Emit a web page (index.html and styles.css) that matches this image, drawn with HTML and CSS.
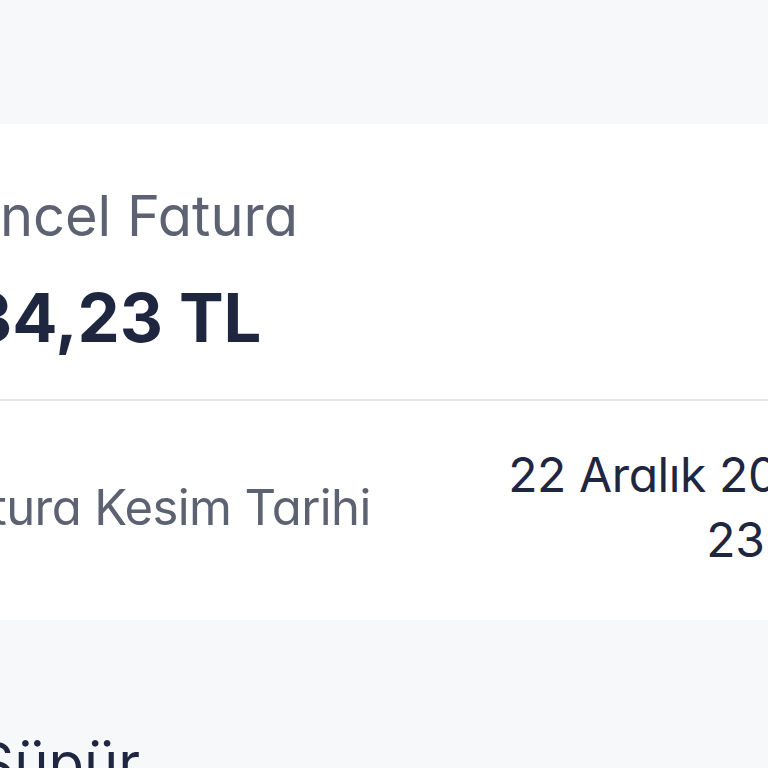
FILE: index.html
```html
<!DOCTYPE html>
<html lang="tr">
<head>
    <meta charset="UTF-8">
    <meta name="viewport" content="width=device-width, initial-scale=1.0">
    <title>Fatura</title>
    <link rel="stylesheet" href="styles.css">
</head>
<body>
    <div class="screen">
        <section class="bill-card">
            <div class="bill-head">
                <p class="bill-label">Güncel Fatura</p>
                <p class="bill-amount">134,23 TL</p>
            </div>
            <div class="bill-row">
                <span class="row-label">Fatura Kesim Tarihi</span>
                <span class="row-value">22 Aralık 2023<br>23:59</span>
            </div>
        </section>
        <h2 class="section-title">Süpür</h2>
    </div>
</body>
</html>
```
FILE: styles.css
```css
:root {
    --page-bg: #f7f8fa;
    --card-bg: #ffffff;
    --muted-text: #5c6272;
    --dark-text: #1f2640;
    --divider: #e5e6e9;
}
* { margin: 0; padding: 0; box-sizing: border-box; }
body { font-family: 'Inter', 'Noto Sans', sans-serif; font-feature-settings: "cv11"; background-color: var(--page-bg); color: var(--dark-text); overflow: hidden; height: 768px; }
.screen { width: 960px; margin-left: -95px; padding-top: 124px; }

/* --- Bill card --- */
.bill-card { background-color: var(--card-bg); }
.bill-head { padding: 0 20px; height: 277px; border-bottom: 2px solid var(--divider); }
.bill-label { padding-top: 58px; font-size: 56px; line-height: 68px; color: var(--muted-text); font-weight: 400; }
.bill-amount { margin-top: 28px; margin-left: 15px; font-size: 67px; line-height: 80px; font-weight: 700; color: var(--dark-text); }
.bill-row { display: flex; justify-content: space-between; align-items: center; padding: 0 29px 0 20px; height: 219px; }
.row-label { font-size: 49px; letter-spacing: -0.6px; color: var(--muted-text); padding-bottom: 6px; margin-left: 10px; }
.row-value { font-size: 48px; letter-spacing: -0.4px; line-height: 65px; text-align: right; color: var(--dark-text); padding-bottom: 8px; }

/* --- Next section --- */
.section-title { margin-top: 108px; padding-left: 72px; font-size: 58px; font-weight: 400; color: var(--dark-text); }
```
